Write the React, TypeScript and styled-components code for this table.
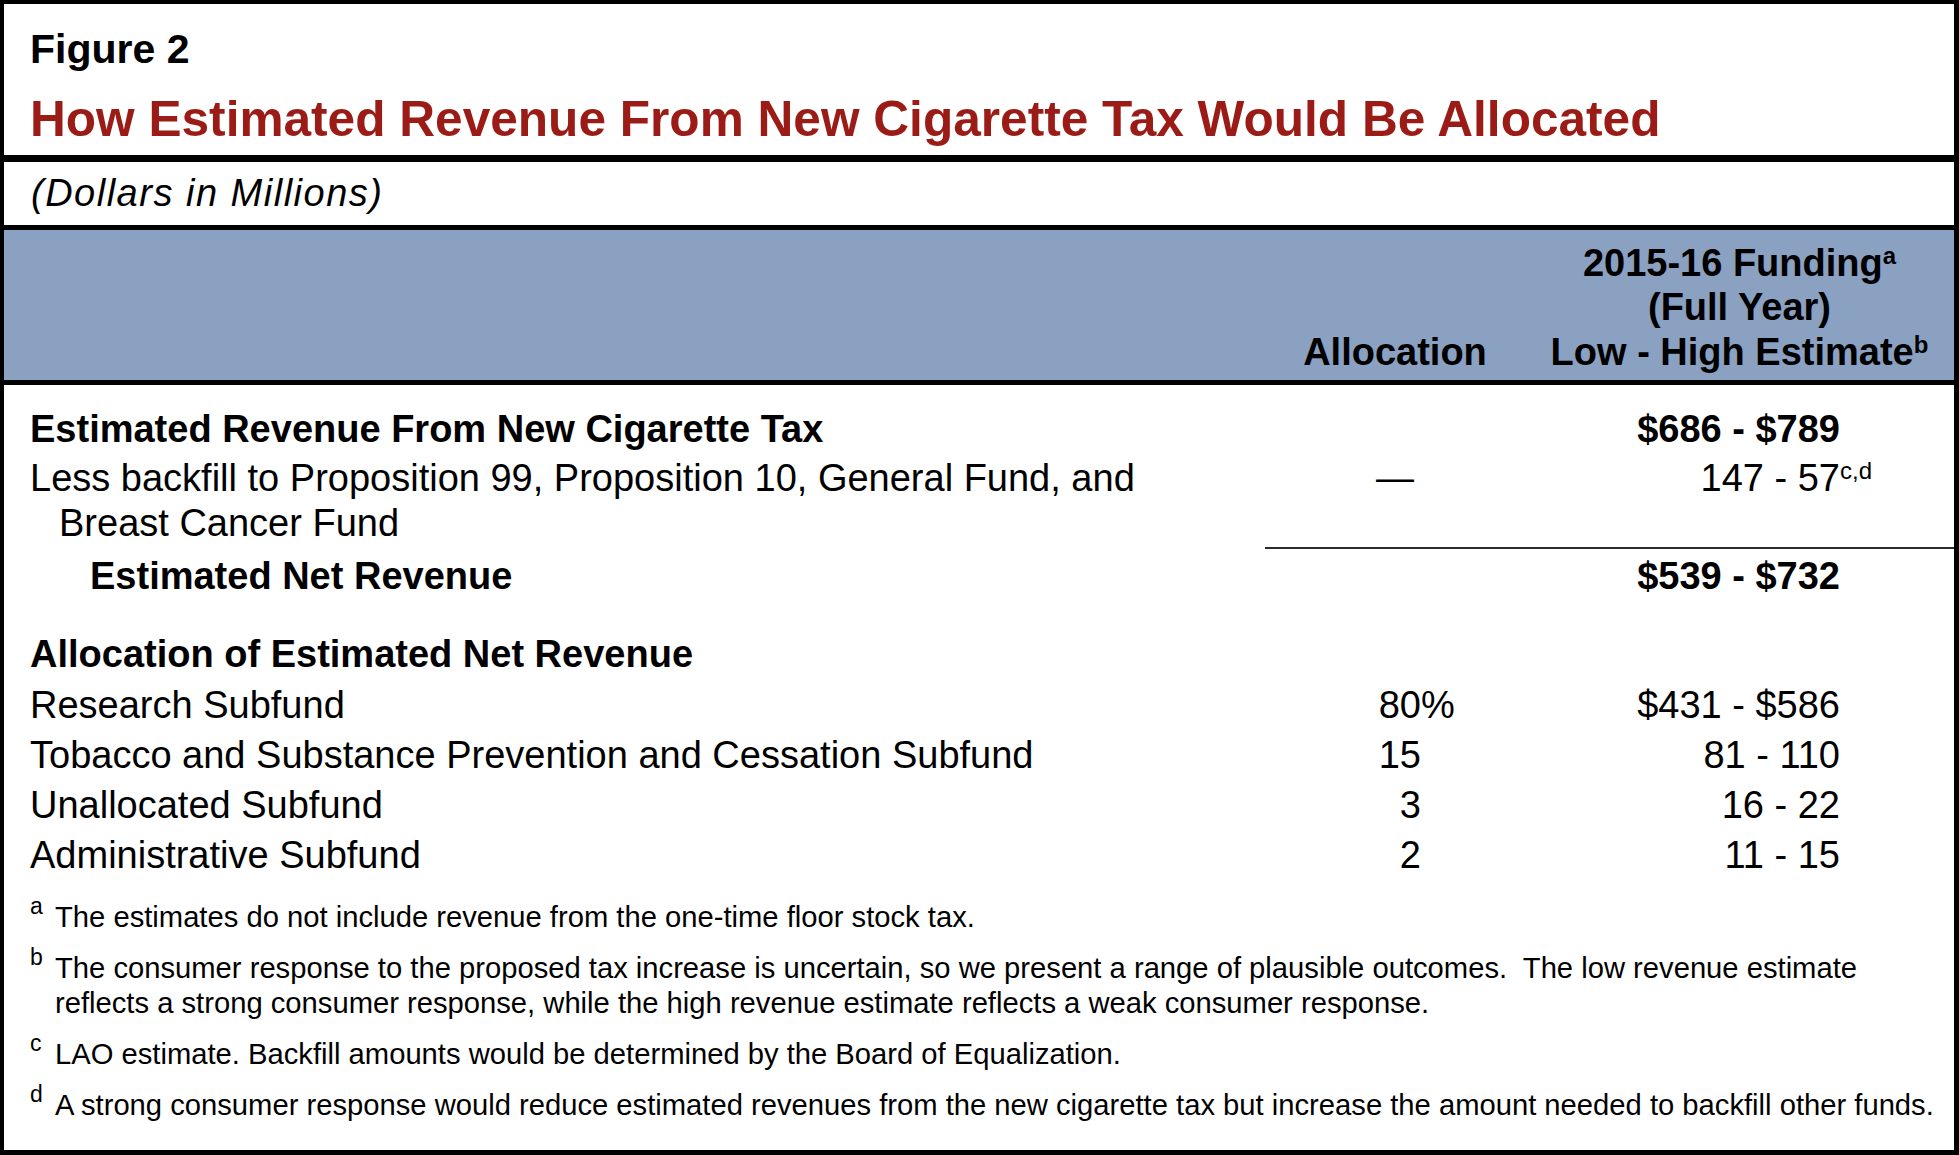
import React from 'react';
import styled, { createGlobalStyle } from 'styled-components';

const GlobalStyle = createGlobalStyle`
  html, body {
    margin: 0;
    padding: 0;
    background: #ffffff;
  }
  body {
    font-family: "Liberation Sans", Arial, Helvetica, sans-serif;
    color: #000000;
  }
`;

const COLS = '1261px 260px 1fr';

const Frame = styled.div`
  width: 1959px;
  height: 1155px;
  box-sizing: border-box;
  border-style: solid;
  border-color: #000;
  border-width: 4px 5px 5px 4px;
  display: flex;
  flex-direction: column;
  overflow: hidden;
  background: #fff;
`;

const TitleBlock = styled.header`
  height: 151px;
  box-sizing: border-box;
  padding: 22px 0 0 26px;
  flex: none;
`;

const FigureLabel = styled.div`
  font-size: 41px;
  font-weight: 700;
  line-height: 46px;
`;

const Title = styled.h1`
  margin: 19px 0 0;
  font-size: 49.6px;
  line-height: 56px;
  font-weight: 700;
  color: #9b1c16;
  white-space: nowrap;
`;

const Divider = styled.div<{ $h: number }>`
  height: ${(p) => p.$h}px;
  background: #000;
  flex: none;
`;

const Subtitle = styled.div`
  height: 63px;
  padding-left: 27px;
  font-style: italic;
  font-size: 38px;
  line-height: 63px;
  letter-spacing: 1.5px;
  flex: none;
`;

const HeaderRow = styled.div`
  display: grid;
  grid-template-columns: ${COLS};
  height: 150px;
  box-sizing: border-box;
  padding-bottom: 6px;
  background: #8ba1c1;
  align-items: end;
  font-weight: 700;
  font-size: 38px;
  line-height: 44.5px;
  text-align: center;
  flex: none;
`;

const HeaderCell = styled.div`
  white-space: nowrap;
`;

const Sup = styled.span<{ $size?: number; $raise?: number }>`
  font-size: ${(p) => p.$size ?? 24}px;
  vertical-align: ${(p) => p.$raise ?? 12}px;
  line-height: 0;
  font-weight: inherit;
`;

const Hang = styled.span`
  display: inline-block;
  width: 0;
  white-space: nowrap;
  text-align: left;
`;

const Body = styled.section`
  padding-top: 19px;
  flex: none;
`;

const Row = styled.div<{ $lh?: number; $mt?: number }>`
  display: grid;
  grid-template-columns: ${COLS};
  margin-top: ${(p) => p.$mt ?? 0}px;
  font-size: 38px;
  line-height: ${(p) => p.$lh ?? 50}px;
`;

const Label = styled.div<{ $indent?: number; $bold?: boolean; $hang?: number }>`
  padding-left: ${(p) => 26 + (p.$indent ?? 0) + (p.$hang ?? 0)}px;
  text-indent: -${(p) => p.$hang ?? 0}px;
  font-weight: ${(p) => (p.$bold ? 700 : 400)};
  white-space: nowrap;
`;

const AllocCell = styled.div<{ $center?: boolean }>`
  text-align: ${(p) => (p.$center ? 'center' : 'right')};
  padding-right: ${(p) => (p.$center ? 0 : 104)}px;
  white-space: nowrap;
`;

const FundCell = styled.div<{ $bold?: boolean }>`
  text-align: right;
  padding-right: 114px;
  font-weight: ${(p) => (p.$bold ? 700 : 400)};
  white-space: nowrap;
`;

const RuleRow = styled.div`
  display: grid;
  grid-template-columns: ${COLS};
  margin-top: 1px;
`;

const RuleLine = styled.div`
  grid-column: 2 / 4;
  height: 2px;
  background: #2a2a2a;
`;

const Notes = styled.footer`
  padding-top: 20px;
  display: flex;
  flex-direction: column;
  gap: 16px;
`;

const Note = styled.p`
  margin: 0;
  padding-left: 51px;
  text-indent: -25px;
  font-size: 29.2px;
  line-height: 35px;
  white-space: nowrap;
`;

const NoteMark = styled.span`
  display: inline-block;
  width: 25px;
  text-indent: 0;
  font-size: 23px;
  line-height: 0;
  vertical-align: 13px;
`;

type LineItem = { label: string; alloc: string; pct?: boolean; fund: string };

const subfunds: LineItem[] = [
  { label: 'Research Subfund', alloc: '80', pct: true, fund: '$431 - $586' },
  { label: 'Tobacco and Substance Prevention and Cessation Subfund', alloc: '15', fund: '81 - 110' },
  { label: 'Unallocated Subfund', alloc: '3', fund: '16 - 22' },
  { label: 'Administrative Subfund', alloc: '2', fund: '11 - 15' },
];

export default function App() {
  return (
    <>
      <GlobalStyle />
      <Frame>
        <TitleBlock>
          <FigureLabel>Figure 2</FigureLabel>
          <Title>How Estimated Revenue From New Cigarette Tax Would Be Allocated</Title>
        </TitleBlock>
        <Divider $h={7} />
        <Subtitle>(Dollars in Millions)</Subtitle>
        <Divider $h={5} />
        <HeaderRow>
          <HeaderCell />
          <HeaderCell>Allocation</HeaderCell>
          <HeaderCell>
            2015-16 Funding<Sup>a</Sup>
            <br />
            (Full Year)
            <br />
            Low - High Estimate<Sup>b</Sup>
          </HeaderCell>
        </HeaderRow>
        <Divider $h={5} />
        <Body>
          <Row>
            <Label $bold>Estimated Revenue From New Cigarette Tax</Label>
            <AllocCell />
            <FundCell $bold>$686 - $789</FundCell>
          </Row>
          <Row $lh={45} $mt={2}>
            <Label $hang={29}>
              Less backfill to Proposition 99, Proposition 10, General Fund, and
              <br />
              Breast Cancer Fund
            </Label>
            <AllocCell $center>—</AllocCell>
            <FundCell>
              147 - 57
              <Hang>
                <Sup>c,d</Sup>
              </Hang>
            </FundCell>
          </Row>
          <RuleRow>
            <RuleLine />
          </RuleRow>
          <Row $mt={2}>
            <Label $bold $indent={60}>Estimated Net Revenue</Label>
            <AllocCell />
            <FundCell $bold>$539 - $732</FundCell>
          </Row>
          <Row $mt={28}>
            <Label $bold>Allocation of Estimated Net Revenue</Label>
            <AllocCell />
            <FundCell />
          </Row>
          {subfunds.map((item, i) => (
            <Row key={item.label} $mt={i === 0 ? 1 : 0}>
              <Label>{item.label}</Label>
              <AllocCell>
                {item.alloc}
                {item.pct ? <Hang>%</Hang> : null}
              </AllocCell>
              <FundCell>{item.fund}</FundCell>
            </Row>
          ))}
        </Body>
        <Notes>
          <Note>
            <NoteMark>a</NoteMark>The estimates do not include revenue from the one-time floor stock tax.
          </Note>
          <Note>
            <NoteMark>b</NoteMark>The consumer response to the proposed tax increase is uncertain, so we present a range of
            plausible outcomes.{'\u00a0 '}The low revenue estimate
            <br />
            reflects a strong consumer response, while the high revenue estimate reflects a weak consumer response.
          </Note>
          <Note>
            <NoteMark>c</NoteMark>LAO estimate. Backfill amounts would be determined by the Board of Equalization.
          </Note>
          <Note>
            <NoteMark>d</NoteMark>A strong consumer response would reduce estimated revenues from the new cigarette tax but
            increase the amount needed to backfill other funds.
          </Note>
        </Notes>
      </Frame>
    </>
  );
}
